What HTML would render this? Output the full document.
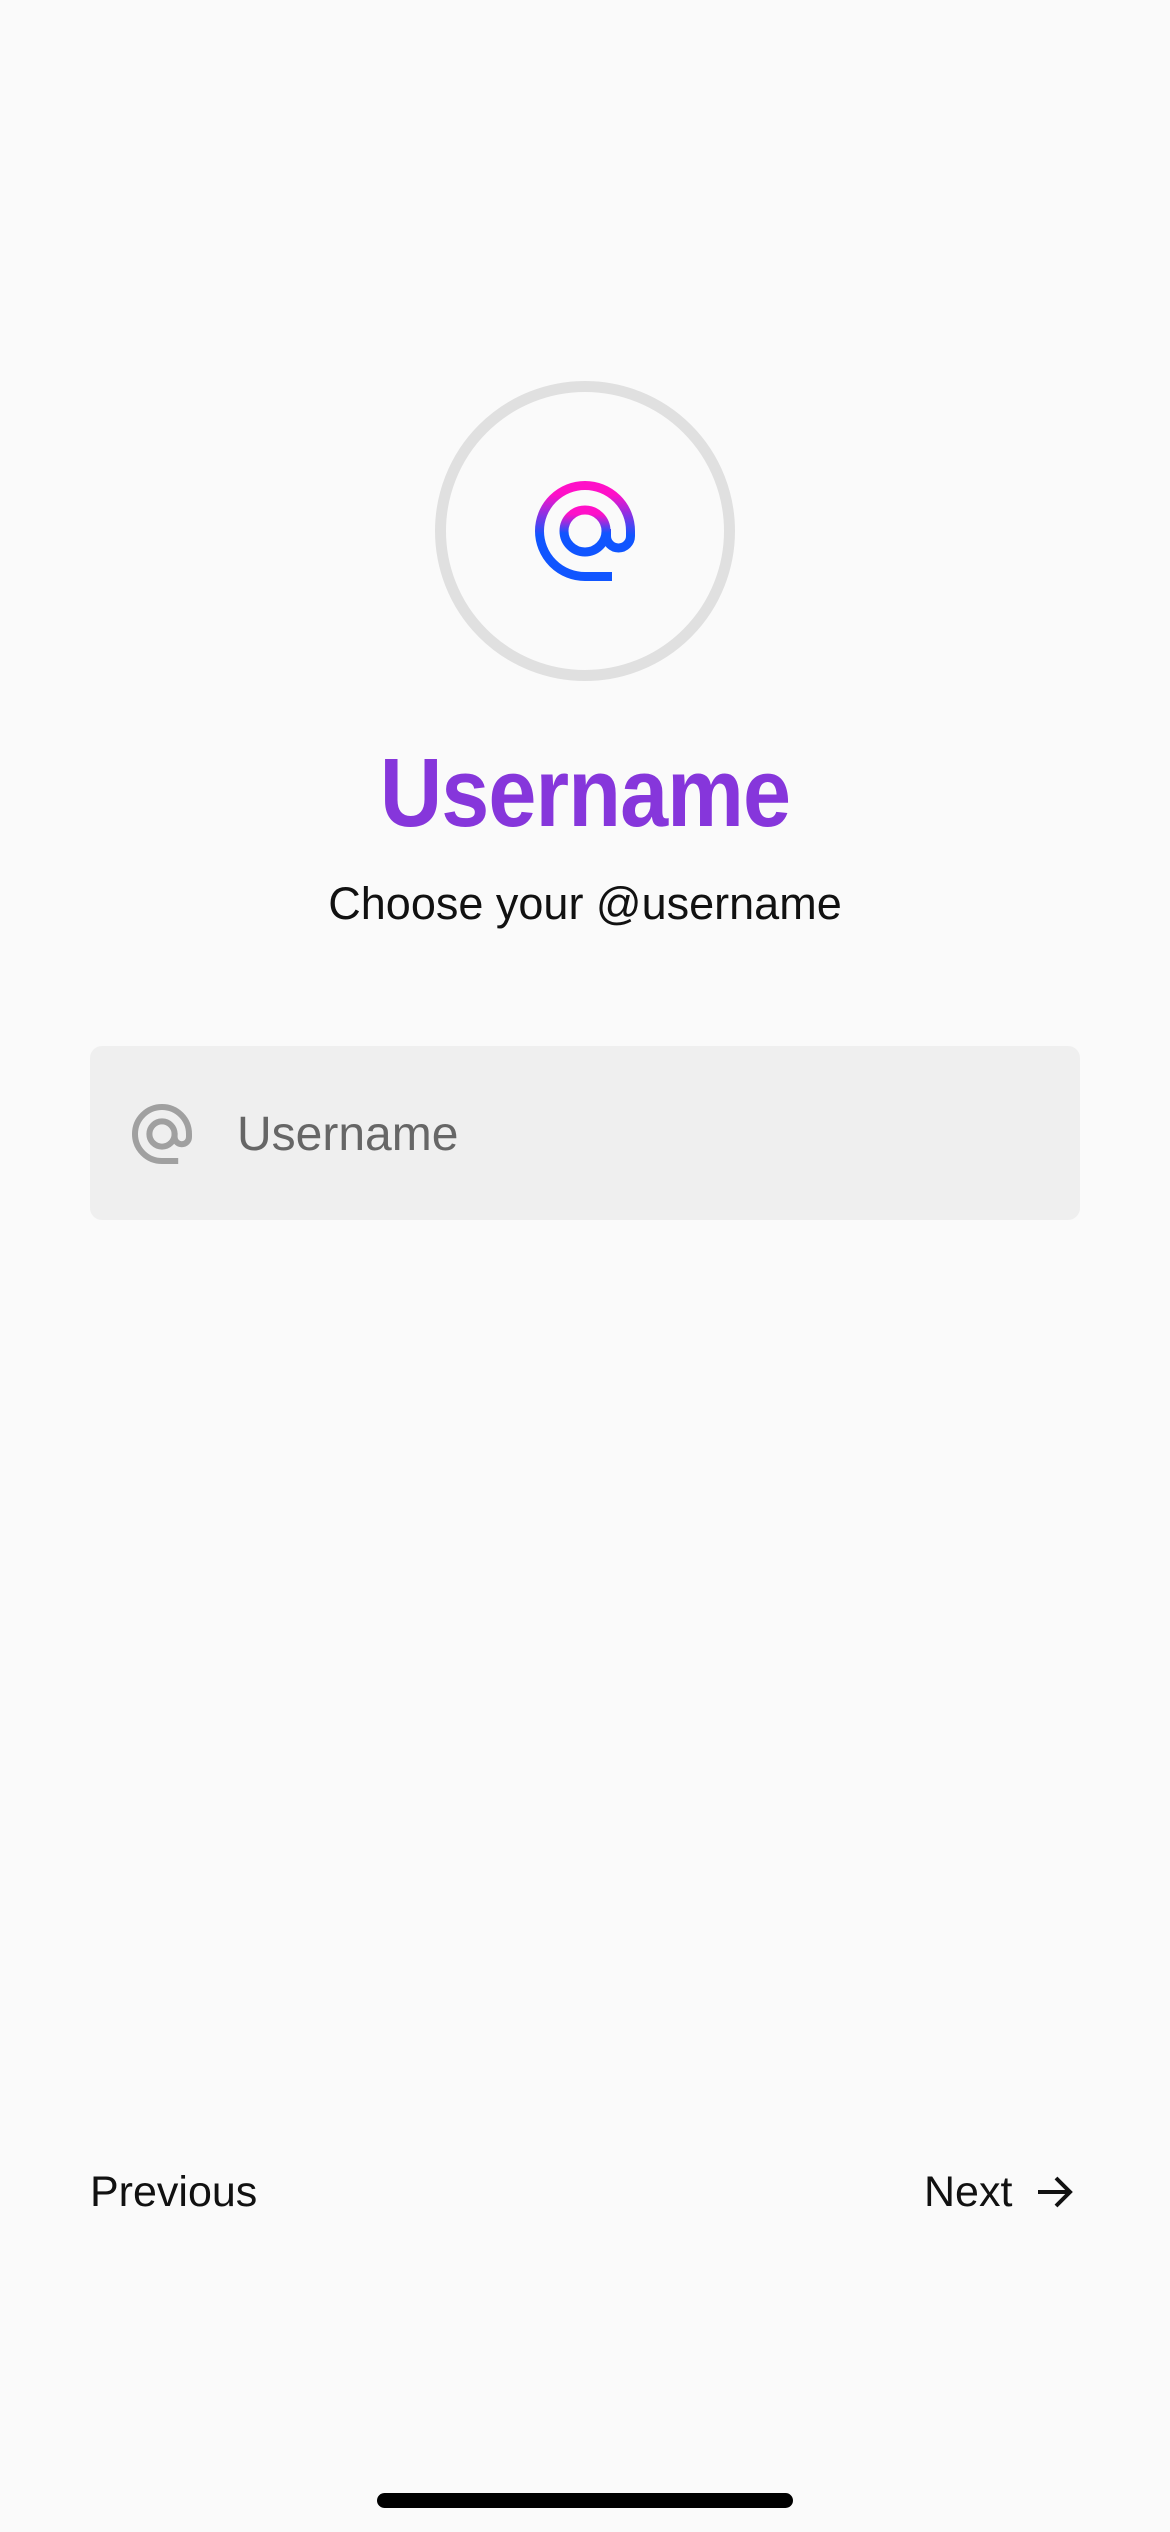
<!DOCTYPE html>
<html><head><meta charset="utf-8"><style>
html,body{margin:0;padding:0;}
body{width:1170px;height:2532px;background:#fafafa;position:relative;overflow:hidden;font-family:"Liberation Sans",sans-serif;}
.abs{position:absolute;}
.title{left:0;width:1170px;top:738px;text-align:center;font-size:97px;font-weight:bold;color:#8636db;line-height:110px;letter-spacing:-1px;transform:scaleX(0.89);}
.sub{left:0;width:1170px;top:874px;text-align:center;font-size:45px;color:#111;line-height:60px;}
.input{left:90px;top:1046px;width:990px;height:174px;background:#efefef;border-radius:12px;}
.ph{left:237px;top:1105px;font-size:48px;color:#666;line-height:60px;}
.nav{top:2164px;font-size:43px;color:#111;line-height:56px;}
.bar{left:377px;top:2493px;width:416px;height:15px;background:#000;border-radius:8px;}
</style></head><body>
<div class="abs" style="left:435px;top:381px;width:278px;height:278px;border:11px solid #e0e0e0;border-radius:50%;"></div>
<svg class="abs" style="left:535px;top:481px" width="100" height="100" viewBox="0 0 100 100">
<defs><linearGradient id="g" x1="0" y1="0" x2="0" y2="1"><stop offset="0.1" stop-color="#ff10c8"/><stop offset="0.55" stop-color="#1055ff"/><stop offset="1" stop-color="#1055ff"/></linearGradient></defs>
<g fill="none" stroke="url(#g)" stroke-width="9">
<path d="M77 95.5 H50 A45.5 45.5 0 1 1 95.5 50 V55 A12 12 0 0 1 71.5 55 V48"/>
<circle cx="50" cy="50" r="21"/>
</g></svg>
<div class="abs title">Username</div>
<div class="abs sub">Choose your @username</div>
<div class="abs input"></div>
<svg class="abs" style="left:132px;top:1104px" width="60" height="60" viewBox="0 0 100 100">
<g fill="none" stroke="#a0a0a0" stroke-width="10">
<path d="M77 95 H50 A45 45 0 1 1 95 50 V55 A12 12 0 0 1 71 55 V48"/>
<circle cx="50" cy="50" r="21"/>
</g></svg>
<div class="abs ph">Username</div>
<div class="abs nav" style="left:90px;">Previous</div>
<div class="abs nav" style="left:924px;">Next</div>
<svg class="abs" style="left:1036px;top:2174px" width="38" height="36" viewBox="0 0 38 36">
<path d="M2 18 H34 M20 4 L34 18 L20 32" fill="none" stroke="#111" stroke-width="4"/>
</svg>
<div class="abs bar"></div>
</body></html>
